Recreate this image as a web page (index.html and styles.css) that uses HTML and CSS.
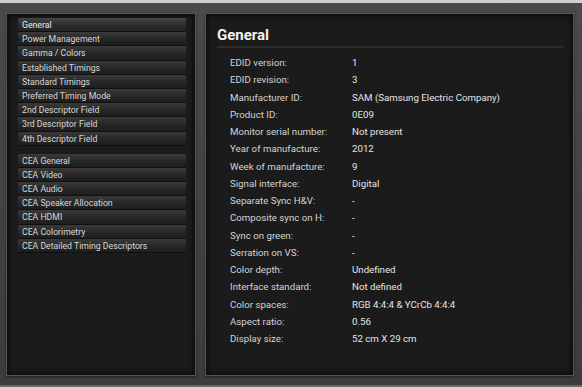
FILE: index.html
```html
<!DOCTYPE html>
<html lang="en">
<head>
  <meta charset="UTF-8">
  <meta name="viewport" content="width=device-width, initial-scale=1.0">
  <title>EDID Viewer</title>
  <link rel="stylesheet" href="styles.css">
</head>
<body>
  <div class="screen">
    <div class="sidebar">
      <ul class="menu">
        <li class="menu-item active">General</li>
        <li class="menu-item">Power Management</li>
        <li class="menu-item">Gamma / Colors</li>
        <li class="menu-item">Established Timings</li>
        <li class="menu-item">Standard Timings</li>
        <li class="menu-item">Preferred Timing Mode</li>
        <li class="menu-item">2nd Descriptor Field</li>
        <li class="menu-item">3rd Descriptor Field</li>
        <li class="menu-item">4th Descriptor Field</li>
      </ul>
      <ul class="menu">
        <li class="menu-item">CEA General</li>
        <li class="menu-item">CEA Video</li>
        <li class="menu-item">CEA Audio</li>
        <li class="menu-item">CEA Speaker Allocation</li>
        <li class="menu-item">CEA HDMI</li>
        <li class="menu-item">CEA Colorimetry</li>
        <li class="menu-item">CEA Detailed Timing Descriptors</li>
      </ul>
    </div>

    <div class="content">
      <h1 class="title">General</h1>
      <dl class="details">
        <div class="row"><dt>EDID version:</dt><dd>1</dd></div>
        <div class="row"><dt>EDID revision:</dt><dd>3</dd></div>
        <div class="row"><dt>Manufacturer ID:</dt><dd>SAM (Samsung Electric Company)</dd></div>
        <div class="row"><dt>Product ID:</dt><dd>0E09</dd></div>
        <div class="row"><dt>Monitor serial number:</dt><dd>Not present</dd></div>
        <div class="row"><dt>Year of manufacture:</dt><dd>2012</dd></div>
        <div class="row"><dt>Week of manufacture:</dt><dd>9</dd></div>
        <div class="row"><dt>Signal interface:</dt><dd>Digital</dd></div>
        <div class="row"><dt>Separate Sync H&amp;V:</dt><dd>-</dd></div>
        <div class="row"><dt>Composite sync on H:</dt><dd>-</dd></div>
        <div class="row"><dt>Sync on green:</dt><dd>-</dd></div>
        <div class="row"><dt>Serration on VS:</dt><dd>-</dd></div>
        <div class="row"><dt>Color depth:</dt><dd>Undefined</dd></div>
        <div class="row"><dt>Interface standard:</dt><dd>Not defined</dd></div>
        <div class="row"><dt>Color spaces:</dt><dd>RGB 4:4:4 &amp; YCrCb 4:4:4</dd></div>
        <div class="row"><dt>Aspect ratio:</dt><dd>0.56</dd></div>
        <div class="row"><dt>Display size:</dt><dd>52 cm X 29 cm</dd></div>
      </dl>
    </div>
  </div>
</body>
</html>
```

FILE: styles.css
```css
* {
  margin: 0;
  padding: 0;
  box-sizing: border-box;
}

body {
  width: 582px;
  height: 387px;
  overflow: hidden;
  background-color: #3f3f3f;
  font-family: Roboto, "Liberation Sans", sans-serif;
  color: #dcdcdc;
}

.screen {
  height: 100%;
  display: flex;
  gap: 9px;
  padding: 10px 8px 9px 6px;
  border-top: 3px solid #cfcfcf;
  border-bottom: 2px solid #6a6a6a;
  background: linear-gradient(#4a4a4a, #3c3c3c);
}

.sidebar,
.content {
  background-color: #1b1b1b;
  border: 1px solid #555;
  box-shadow: inset 0 0 4px 2px #0c0c0c, 0 1px 2px rgba(0, 0, 0, 0.5);
}

.sidebar {
  width: 190px;
  padding: 4px 9px 0 11px;
  display: flex;
  flex-direction: column;
  gap: 8px;
}

.menu {
  list-style: none;
}

.menu-item {
  height: 14.2px;
  line-height: 14px;
  padding-left: 4px;
  font-size: 8.7px;
  color: #d8d8d8;
  white-space: nowrap;
  background: linear-gradient(#3a3a3a, #262626 55%, #1e1e1e);
  border-bottom: 1px solid #0f0f0f;
  border-radius: 1px;
}

.menu-item.active {
  background: linear-gradient(#444, #2c2c2c 55%, #232323);
  color: #eee;
}

.content {
  flex: 1;
  padding: 12px 10px 0 11px;
}

.title {
  font-size: 15px;
  font-weight: bold;
  color: #f2f2f2;
  line-height: 18px;
  padding-bottom: 2px;
  border-bottom: 2px solid #2e2e2e;
}

.details {
  padding: 6px 0 0 13px;
}

.row {
  display: flex;
  height: 17.25px;
  line-height: 17px;
  font-size: 9.7px;
}

.row dt {
  width: 122px;
  color: #d4d4d4;
}

.row dd {
  color: #e4e4e4;
}
```
